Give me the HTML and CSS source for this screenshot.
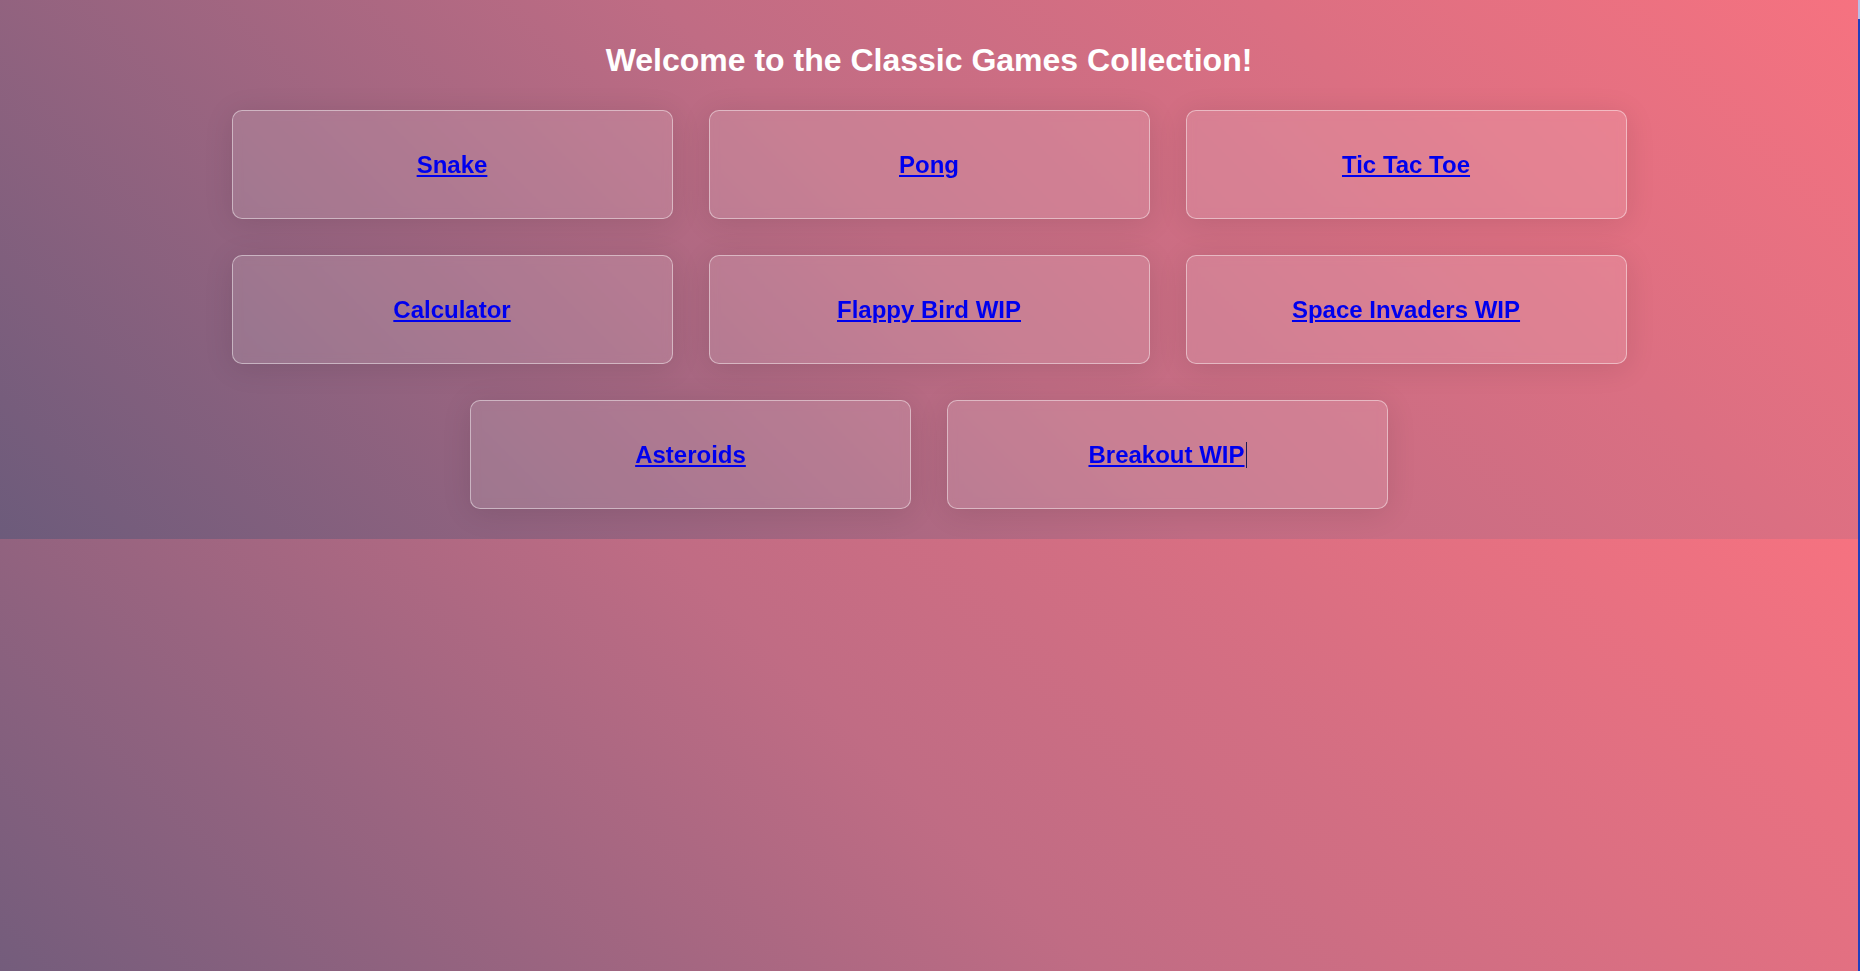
FILE: index.html
```html
<!DOCTYPE html>
<html lang="en">
<head>
<meta charset="utf-8">
<title>Classic Games Collection</title>
<link rel="stylesheet" href="styles.css">
</head>
<body>
  <h1 class="title">Welcome to the Classic Games Collection!</h1>
  <div class="games">
    <div class="card"><h2 class="card-title"><a href="#">Snake</a></h2></div>
    <div class="card"><h2 class="card-title"><a href="#">Pong</a></h2></div>
    <div class="card"><h2 class="card-title"><a href="#">Tic Tac Toe</a></h2></div>
    <div class="card"><h2 class="card-title"><a href="#">Calculator</a></h2></div>
    <div class="card"><h2 class="card-title"><a href="#">Flappy Bird WIP</a></h2></div>
    <div class="card"><h2 class="card-title"><a href="#">Space Invaders WIP</a></h2></div>
    <div class="card"><h2 class="card-title"><a href="#">Asteroids</a></h2></div>
    <div class="card"><h2 class="card-title"><a href="#">Breakout WIP</a><span class="caret"></span></h2></div>
  </div>
  <div class="edge-strip"></div>
</body>
</html>
```
FILE: styles.css
```css
html {
  background: linear-gradient(45deg, #6c5b7b, #c06c84, #f67280);
}

body {
  margin: 0;
  padding: 20px 22px 20px 20px;
  font-family: "Liberation Sans", Arial, sans-serif;
}

.title {
  margin: 22px 0 21px;
  font-size: 32px;
  font-weight: bold;
  line-height: 37px;
  color: #ffffff;
  text-align: center;
}

.games {
  width: 1395px;
  margin: 0 auto;
  padding: 10px 0;
  display: flex;
  flex-wrap: wrap;
  justify-content: center;
  gap: 36px;
}

.card {
  flex: 0 0 441px;
  box-sizing: border-box;
  height: 109px;
  display: flex;
  align-items: center;
  justify-content: center;
  background: rgba(255, 255, 255, 0.13);
  border: 1px solid rgba(255, 255, 255, 0.45);
  border-radius: 10px;
  box-shadow: 0 4px 30px rgba(0, 0, 0, 0.1);
  backdrop-filter: blur(5px);
}

.card-title {
  margin: 0;
  font-size: 24px;
  font-weight: bold;
  line-height: 28px;
  text-align: center;
  display: flex;
  align-items: center;
}

.card-title a {
  color: #0000ee;
  text-decoration: underline;
}

.caret {
  display: inline-block;
  width: 1px;
  height: 26px;
  margin-left: 1px;
  background: #1c1c55;
}

.edge-strip {
  position: fixed;
  top: 0;
  right: 0;
  bottom: 0;
  width: 2px;
  background: linear-gradient(to bottom, #b9bfe8 0, #b9bfe8 19px, #1f3fbf 19px, #1f3fbf 100%);
}
```
